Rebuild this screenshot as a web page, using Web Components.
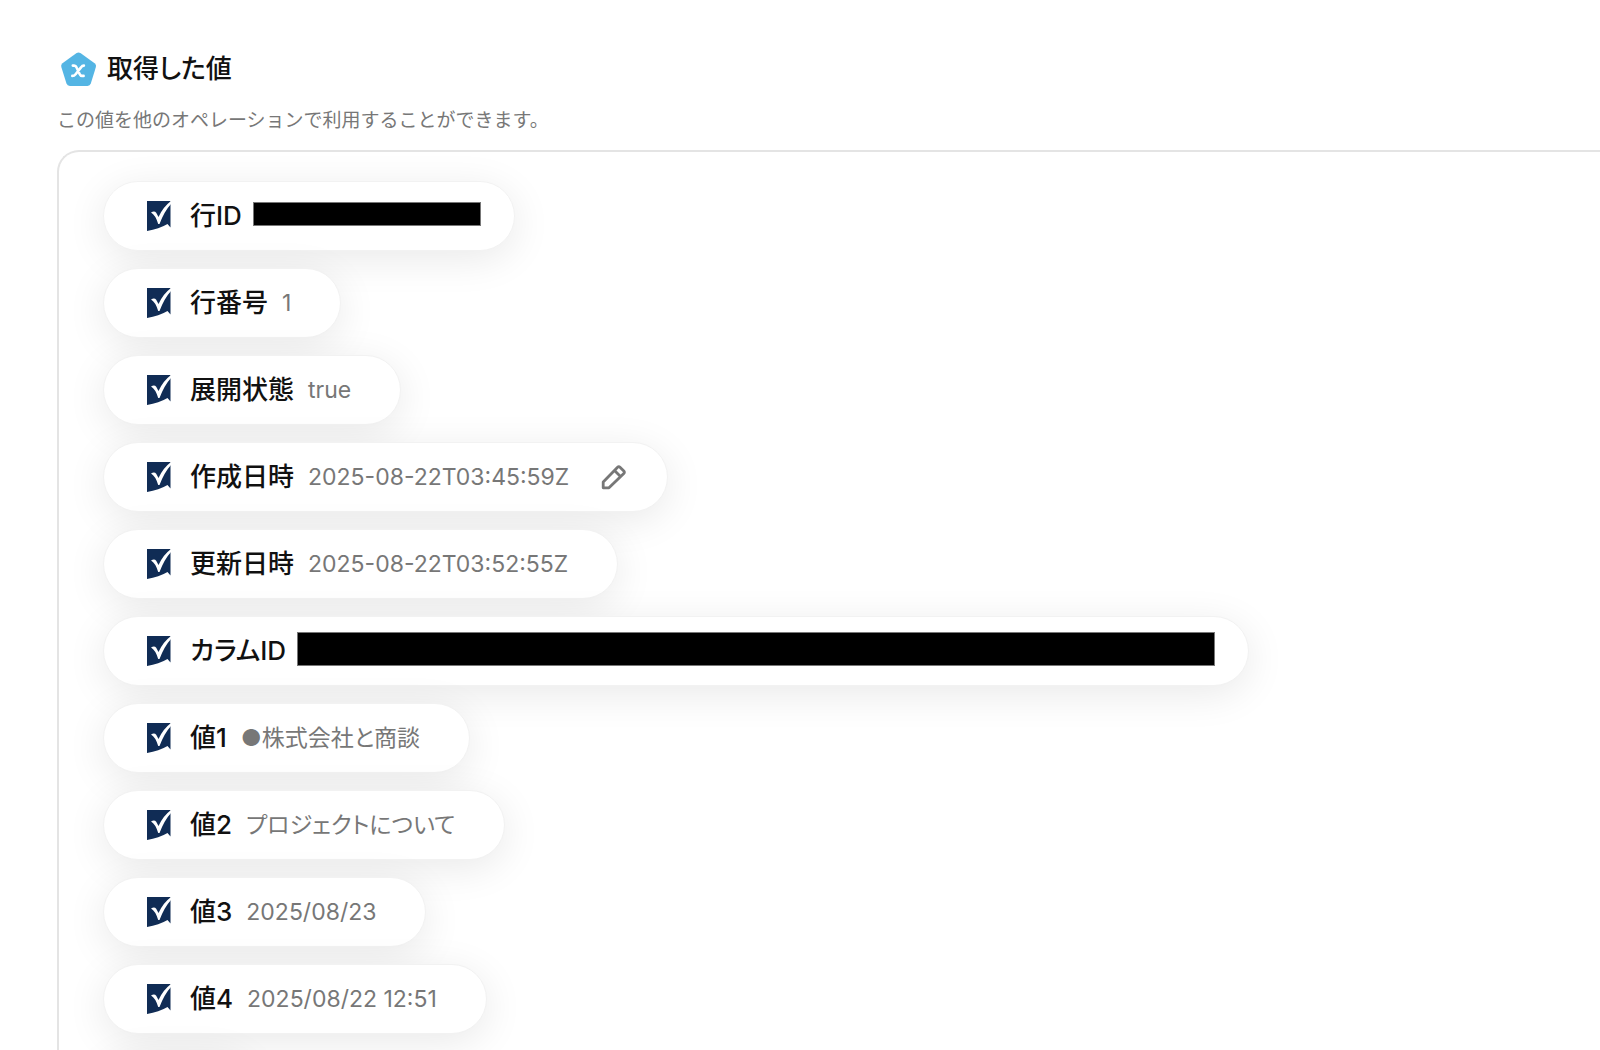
<!DOCTYPE html>
<html lang="ja">
<head>
<meta charset="UTF-8">
<meta name="viewport" content="width=device-width, initial-scale=1.0">
<title>取得した値</title>
<style>
    html, body { height: 100%; margin: 0; }
    body {
        background: #fff; color: #111; overflow: hidden;
        font-family: Inter, "Noto Sans CJK JP", sans-serif;
        font-feature-settings: "palt";
    }
</style>
</head>
<body>
<value-output>
    <span slot="title">取得した値</span>
    <span slot="note">この値を他のオペレーションで利用することができます。</span>
    <value-pill label="行ID"><redacted-bar style="--w: 228px; --h: 24px"></redacted-bar></value-pill>
    <value-pill label="行番号">1</value-pill>
    <value-pill label="展開状態">true</value-pill>
    <value-pill label="作成日時" editable>2025-08-22T03:45:59Z</value-pill>
    <value-pill label="更新日時">2025-08-22T03:52:55Z</value-pill>
    <value-pill label="カラムID"><redacted-bar style="--w: 918px; --h: 34px"></redacted-bar></value-pill>
    <value-pill label="値1">●株式会社と商談</value-pill>
    <value-pill label="値2">プロジェクトについて</value-pill>
    <value-pill label="値3">2025/08/23</value-pill>
    <value-pill label="値4">2025/08/22 12:51</value-pill>
    <value-pill label=""></value-pill>
</value-output>

<script>
class ValueOutput extends HTMLElement {
    connectedCallback() {
        this.attachShadow({ mode: 'open' });
        this.shadowRoot.innerHTML = `
            <style>
                :host {
                    display: flex; flex-direction: column; height: 100vh;
                    box-sizing: border-box; padding: 48px 0 0 57px;
                }
                header { display: flex; align-items: center; gap: 9px; padding-left: 3px; height: 42px; }
                header svg { width: 38px; height: 38px; flex: none; margin-top: 2px; }
                h1 { margin: 0; font-size: 26px; line-height: 42px; font-weight: 500; color: #111; }
                p { margin: 16px 0 14px; font-size: 19px; line-height: 30px; color: #777; font-feature-settings: normal; }

                .panel {
                    flex: 1; min-height: 0; overflow: hidden; box-sizing: border-box;
                    border: 2px solid #e4e4e4; border-right: 0; border-bottom: 0;
                    border-top-left-radius: 22px; padding: 29px 44px 0;
                    display: flex; flex-direction: column; align-items: flex-start; gap: 17px;
                }
            </style>
            <header>
                <svg viewBox="0 0 38 38" aria-hidden="true">
                    <path d="M16.6 2.1Q18.500.9 20.4 2.1L34.600 12.300Q36.600 13.800 35.900 16.100L30.800 32.600Q30 35 27.500 35H9.800Q7.300 35 6.500 32.600L1.300 16.100Q.6 13.800 2.500 12.300Z" fill="#54b5e4"/>
                    <path d="M12.800 14.600H14.200Q15.800 14.600 16.600 16.600L19.600 23Q20.400 24.900 22 24.900H23.600M23.900 14.600Q22.200 14.600 21 16.400L15.600 23.200Q14.200 24.900 12.300 24.900" fill="none" stroke="#fff" stroke-width="2.600" stroke-linecap="round"/>
                </svg>
                <h1><slot name="title"></slot></h1>
            </header>
            <p><slot name="note"></slot></p>
            <section class="panel"><slot></slot></section>
        `;
    }
}
customElements.define('value-output', ValueOutput);

class ValuePill extends HTMLElement {
    connectedCallback() {
        const label = this.getAttribute('label');
        const edit = this.hasAttribute('editable') ? `
            <button type="button" aria-label="編集">
                <svg viewBox="0 0 26 26" aria-hidden="true">
                    <path d="M2.200 23.800V18L16.600 3.200Q17.800 2 19 3.200L22.800 7Q24 8.200 22.800 9.400L8 23.800ZM13.500 6.500L19.500 12.500" fill="none" stroke="#777" stroke-width="2.800" stroke-linejoin="round"/>
                </svg>
            </button>` : '';
        this.attachShadow({ mode: 'open' });
        this.shadowRoot.innerHTML = `
            <style>
                :host {
                    display: flex; align-items: center; flex: none; box-sizing: border-box;
                    height: 70px; padding: 0 49px 0 43px; border-radius: 35px;
                    background: #fff; border: 1px solid #f2f2f2;
                    box-shadow: 0 8px 40px rgba(0, 0, 0, 0.09);
                }
                :host([editable]) { padding-right: 40px; }
                .logo { width: 24px; height: 30px; flex: none; margin-right: 19px; }
                .label { font-size: 26px; line-height: 36px; font-weight: 500; color: #111; white-space: nowrap; }
                .value { display: flex; align-items: center; margin-left: 14px; font-size: 23px; line-height: 32px; color: #777; white-space: nowrap; }
                button { width: 26px; height: 26px; margin-left: 32px; padding: 0; border: 0; background: none; cursor: pointer; }
                button svg { display: block; width: 26px; height: 26px; }
            </style>
            <svg class="logo" viewBox="0 0 24 30" aria-hidden="true">
                <path d="M0 0H23.500V26.500L20.500 23Q12 28 0 30Z" fill="#102c55"/>
                <path d="M4 11.500Q7.500 9.500 9.200 11.800L11.500 16Q16 6 24 0V3Q17.500 10 12.500 23H11.200Q8.500 14 4 11.500Z" fill="#fff"/>
            </svg>
            <span class="label">${label}</span>
            <span class="value"><slot></slot></span>
            ${edit}
        `;
    }
}
customElements.define('value-pill', ValuePill);

class RedactedBar extends HTMLElement {
    connectedCallback() {
        this.attachShadow({ mode: 'open' });
        this.shadowRoot.innerHTML = `
            <style>
                :host {
                    display: block; box-sizing: border-box; width: var(--w); height: var(--h);
                    margin: 0 -16px 4px -3px; background: #000; border: 1px solid #777;
                }
            </style>
        `;
    }
}
customElements.define('redacted-bar', RedactedBar);
</script>
</body>
</html>
